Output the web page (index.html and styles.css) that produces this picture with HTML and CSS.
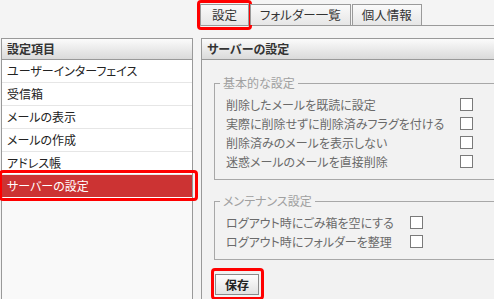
FILE: index.html
```html
<!DOCTYPE html>
<html lang="ja">
<head>
	<meta charset="UTF-8">
	<title>設定</title>
	<link rel="stylesheet" href="styles.css">
</head>
<body>
	<div id="tabBar">
		<div class="tab current">設定</div>
		<div class="tab">フォルダー一覧</div>
		<div class="tab">個人情報</div>
	</div>

	<div id="wrapper">
		<div id="menuPanel">
			<div class="panelHead">設定項目</div>
			<ul class="menuList">
				<li>ユーザーインターフェイス</li>
				<li>受信箱</li>
				<li>メールの表示</li>
				<li>メールの作成</li>
				<li>アドレス帳</li>
				<li class="selected">サーバーの設定</li>
			</ul>
		</div>

		<div id="mainPanel">
			<div class="panelHead">サーバーの設定</div>
			<div class="panelBody">
				<fieldset>
					<legend>基本的な設定</legend>
					<div class="optGrid">
						<label>削除したメールを既読に設定</label><span class="check"></span>
						<label>実際に削除せずに削除済みフラグを付ける</label><span class="check"></span>
						<label>削除済みのメールを表示しない</label><span class="check"></span>
						<label>迷惑メールのメールを直接削除</label><span class="check"></span>
					</div>
				</fieldset>
				<fieldset>
					<legend>メンテナンス設定</legend>
					<div class="optGrid">
						<label>ログアウト時にごみ箱を空にする</label><span class="check"></span>
						<label>ログアウト時にフォルダーを整理</label><span class="check"></span>
					</div>
				</fieldset>
				<div class="buttonRow">
					<button class="saveBtn">保存</button>
				</div>
			</div>
		</div>
	</div>
</body>
</html>
```

FILE: styles.css
```css
html, body {
	margin: 0;
	height: 100%;
	overflow: hidden;
}
body {
	background-color: #f4f4f4;
	font-family: "Noto Sans CJK JP", sans-serif;
	font-size: 12px;
	font-feature-settings: "palt";
	color: #222;
}
/* tabs */
#tabBar {
	display: flex;
	margin-left: 200px;
	padding-top: 4px;
	height: 21px;
	border-bottom: 1px solid #9a9a9a;
}
.tab {
	position: relative;
	height: 20px;
	line-height: 20px;
	padding: 0 9px;
	margin-right: 1px;
	border: 1px solid #9a9a9a;
	border-bottom: none;
	background: linear-gradient(#fafafa, #e6e6e6);
	color: #333;
	font-size: 12.5px;
}
.tab.current {
	padding: 0 11px;
}
.tab.current::after {
	content: "";
	position: absolute;
	top: -5px;
	left: -4px;
	right: -4px;
	bottom: -5px;
	border: 3px solid #ff0000;
	border-radius: 4px;
}
/* panels */
#wrapper {
	display: flex;
	gap: 8px;
	margin: 12px 0 0 1px;
	height: 262px;
}
#menuPanel {
	width: 190px;
	flex: none;
	border: 1px solid #999;
	border-bottom: none;
	background-color: #f9f9f9;
}
#mainPanel {
	flex: 1;
	border: 1px solid #999;
	border-bottom: none;
	border-right: none;
	background-color: #f2f2f2;
}
.panelHead {
	height: 20px;
	line-height: 20px;
	padding-left: 5px;
	border-bottom: 1px solid #999;
	background: linear-gradient(#fbfbfb, #dadada);
	font-weight: bold;
	color: #333;
}
.menuList {
	list-style: none;
	margin: 0;
	padding: 0;
}
.menuList li {
	position: relative;
	height: 22px;
	line-height: 22px;
	padding-left: 5px;
	background-color: #fff;
	border-bottom: 1px solid #e6e6e6;
}
.menuList li.selected {
	background-color: #cc3333;
	color: #fff;
	border-bottom-color: #fff;
}
.menuList li.selected::after {
	content: "";
	position: absolute;
	top: -5px;
	left: -3px;
	right: -6px;
	bottom: -4px;
	border: 3px solid #ff0000;
	border-radius: 4px;
}
/* options */
.panelBody {
	padding: 16px 0 0 12px;
}
fieldset {
	margin: 0 0 14px 0;
	padding: 5px 0 8px 5px;
	border: 1px solid #a8a8a8;
	border-right: none;
}
legend {
	padding: 0 3px;
	line-height: 14px;
	color: #a0a0a0;
}
.optGrid {
	display: grid;
	grid-template-columns: auto auto;
	justify-content: start;
	column-gap: 16px;
	margin-left: 6px;
}
.optGrid label {
	height: 19px;
	line-height: 19px;
	color: #6a6a6a;
}
.check {
	width: 11px;
	height: 11px;
	margin-top: 3px;
	border: 1px solid #7a7a7a;
	background-color: #fff;
}
.saveBtn {
	position: relative;
	width: 44px;
	height: 21px;
	padding: 0;
	margin-left: 1px;
	border: 1px solid #8a8a8a;
	background: linear-gradient(#fdfdfd, #e2e2e2);
	font-family: "Noto Sans CJK JP", sans-serif;
	font-size: 12px;
	font-weight: bold;
	color: #222;
}
.saveBtn::after {
	content: "";
	position: absolute;
	top: -7px;
	left: -5px;
	right: -6px;
	bottom: -6px;
	border: 3px solid #ff0000;
	border-radius: 4px;
}
```
